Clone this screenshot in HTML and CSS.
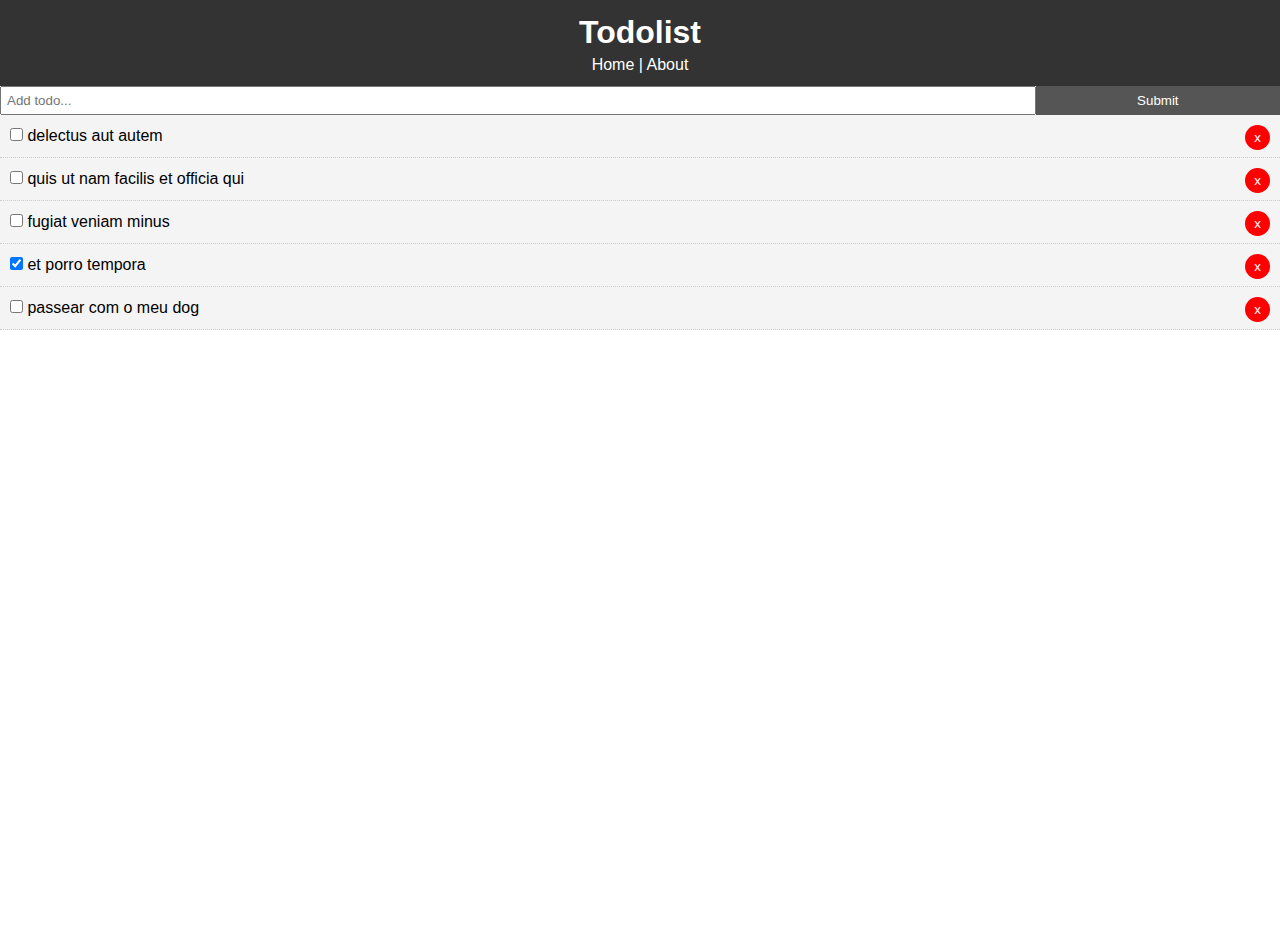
FILE: index.html
```html
<!DOCTYPE html>
<html lang="en">
<head>
<meta charset="utf-8">
<title>Todolist</title>
<link rel="stylesheet" href="styles.css">
</head>
<body>
<header class="header">
  <h1 class="title">Todolist</h1>
  <nav><a class="link" href="#">Home</a> | <a class="link" href="#about">About</a></nav>
</header>
<main>
  <form class="add-form">
    <input class="add-input" type="text" name="title" placeholder="Add todo..." aria-label="Add todo">
    <input class="btn" type="submit" value="Submit">
  </form>
  <div class="todo"><button class="del" type="button">x</button><label><input type="checkbox"> delectus aut autem</label></div>
  <div class="todo"><button class="del" type="button">x</button><label><input type="checkbox"> quis ut nam facilis et officia qui</label></div>
  <div class="todo"><button class="del" type="button">x</button><label><input type="checkbox"> fugiat veniam minus</label></div>
  <div class="todo"><button class="del" type="button">x</button><label><input type="checkbox" checked> et porro tempora</label></div>
  <div class="todo"><button class="del" type="button">x</button><label><input type="checkbox"> passear com o meu dog</label></div>
</main>
</body>
</html>
```
FILE: styles.css
```css
* {
  box-sizing: border-box;
  margin: 0;
  padding: 0;
}

body {
  font-family: Arial, "Liberation Sans", Helvetica, sans-serif;
  line-height: 22px;
}

.header {
  background: #333;
  color: #fff;
  text-align: center;
  padding: 10px;
}

.title {
  font-size: 32px;
  line-height: 44px;
}

.link {
  color: #fff;
  text-decoration: none;
}

.add-form {
  display: flex;
}

.add-input {
  flex: 5;
  padding: 5px;
}

.btn {
  flex: 1;
  border: none;
  background: #555;
  color: #fff;
  padding: 7px 20px;
  cursor: pointer;
}

.todo {
  background: #f4f4f4;
  padding: 10px;
  border-bottom: 1px #ccc dotted;
}

.del {
  float: right;
  background: #f00;
  color: #fff;
  border: none;
  padding: 5px 9px;
  border-radius: 50%;
  cursor: pointer;
}
```
